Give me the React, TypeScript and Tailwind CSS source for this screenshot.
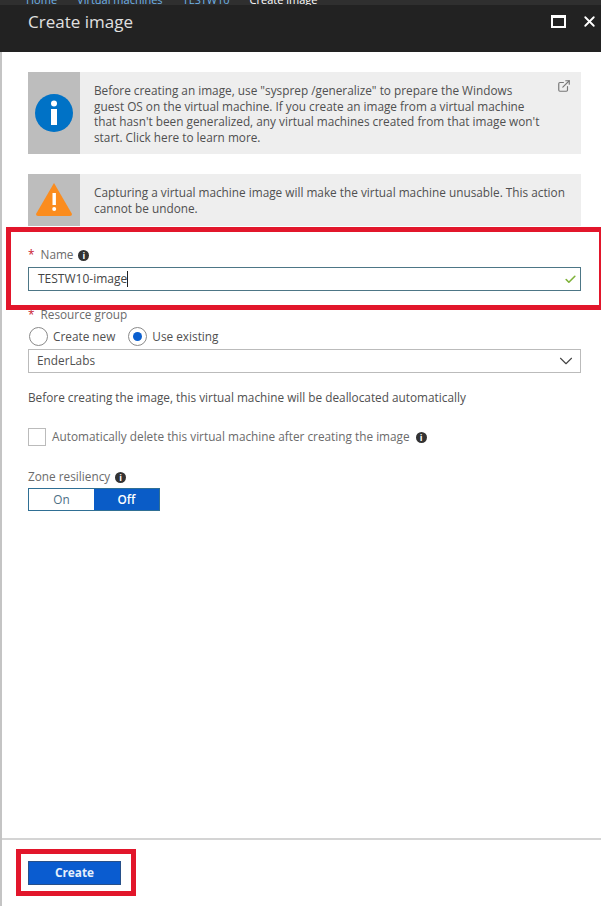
import { ExternalLink, Check, ChevronDown, X } from "lucide-react";

function InfoDot() {
  return (
    <span className="inline-flex h-[11px] w-[11px] items-center justify-center rounded-full bg-[#333] text-[9px] leading-none font-bold text-white">
      i
    </span>
  );
}

function Label({ text, required }: { text: string; required?: boolean }) {
  return (
    <div className="flex h-[16px] items-center text-[11.8px] text-[#6b6b6b]">
      {required && <span className="mr-[6px] text-[#c8202f]">*</span>}
      {text}
    </div>
  );
}

export default function App() {
  return (
    <div className="relative flex h-[906px] w-[601px] flex-col overflow-hidden bg-white font-['Open_Sans',sans-serif] text-[#505050]">
      <div className="flex h-[5px] items-end gap-[20px] overflow-hidden bg-[#2f2f2f] pl-[26px] text-[11px] leading-[11px] text-[#6fb3e8]">
        <span>Home</span>
        <span>Virtual machines</span>
        <span>TESTW10</span>
        <span className="text-white">Create image</span>
      </div>

      <header className="flex h-[47px] items-start justify-between bg-[#222222] pl-[28px] pr-[3px] pt-[3px]">
        <h1 className="text-[17px] leading-[28px] text-[#e0e0e0]">Create image</h1>
        <div className="flex items-center gap-[15px] pt-[5px]">
          <span className="h-[13px] w-[15px] border-2 border-t-[3px] border-white" />
          <X className="h-[17px] w-[17px] text-white" strokeWidth={2.6} />
        </div>
      </header>

      <main className="flex flex-1 flex-col border-l-2 border-[#c4c4c4]">
        <div className="flex-1 pl-[26px] pr-[20px] pt-[20px]">
          <section className="relative flex h-[82px] bg-[#eeeeee]">
            <div className="flex w-[52px] shrink-0 items-center justify-center bg-[#bdbdbd]">
              <svg viewBox="0 0 38 38" className="h-[38px] w-[38px]">
                <circle cx="19" cy="19" r="19" fill="#0072c6" />
                <circle cx="19" cy="9.5" r="3" fill="#fff" />
                <rect x="16" y="15" width="6" height="16" fill="#fff" />
              </svg>
            </div>
            <p className="pl-[14px] pt-[11px] text-[11.8px] leading-[15.5px] whitespace-nowrap">
              Before creating an image, use "sysprep /generalize" to prepare the Windows
              <br />
              guest OS on the virtual machine. If you create an image from a virtual machine
              <br />
              that hasn't been generalized, any virtual machines created from that image won't
              <br />
              start. Click here to learn more.
            </p>
            <ExternalLink className="absolute right-[10px] top-[7px] h-[14px] w-[14px] text-[#777]" />
          </section>

          <section className="mt-[20px] flex h-[52px] bg-[#eeeeee]">
            <div className="flex w-[52px] shrink-0 items-start justify-center bg-[#bdbdbd] pt-[8px]">
              <svg viewBox="0 0 38 34" className="h-[34px] w-[38px]">
                <path d="M19 1 L37 32 Q37 34 35 34 L3 34 Q1 34 1 32 Z" fill="#fb8c1e" />
                <rect x="17.5" y="11" width="3.4" height="12" fill="#fff" />
                <circle cx="19.2" cy="27" r="2" fill="#fff" />
              </svg>
            </div>
            <p className="pl-[14px] pt-[11px] text-[11.8px] leading-[15.5px] whitespace-nowrap">
              Capturing a virtual machine image will make the virtual machine unusable. This action
              <br />
              cannot be undone.
            </p>
          </section>

          <div className="mt-[21px] flex items-center gap-[5px]">
            <Label text="Name" required />
            <InfoDot />
          </div>
          <div className="mt-[4px] flex h-[24px] items-center justify-between border border-[#4d7686] pl-[9px] pr-[3px] text-[12px] text-[#444]">
            <span className="border-r border-[#222] leading-[16px]">TESTW10-image</span>
            <Check className="h-[13px] w-[13px] text-[#7fb23a]" strokeWidth={3} />
          </div>

          <div className="mt-[16px]">
            <Label text="Resource group" required />
          </div>
          <div className="mt-[4px] flex h-[19px] items-center text-[11.8px]">
            <span className="ml-[1px] h-[19px] w-[19px] rounded-full border border-[#8a8a8a]" />
            <span className="ml-[5px]">Create new</span>
            <span className="ml-[13px] flex h-[19px] w-[19px] items-center justify-center rounded-full border border-[#8a8a8a]">
              <span className="h-[9px] w-[9px] rounded-full bg-[#0a5fcf]" />
            </span>
            <span className="ml-[5px]">Use existing</span>
          </div>
          <div className="mt-[3px] flex h-[24px] items-center justify-between border border-[#bbbbbb] pl-[8px] pr-[3px] text-[11.8px]">
            EnderLabs
            <ChevronDown className="h-[22px] w-[22px] text-[#444]" strokeWidth={1.2} />
          </div>

          <p className="mt-[15px] text-[11.8px] leading-[18px]">
            Before creating the image, this virtual machine will be deallocated automatically
          </p>

          <div className="mt-[22px] flex items-center gap-[6px] text-[11.8px] text-[#6b6b6b]">
            <span className="h-[18px] w-[18px] border border-[#bbbbbb]" />
            Automatically delete this virtual machine after creating the image
            <InfoDot />
          </div>

          <div className="mt-[23px] flex items-center gap-[5px]">
            <Label text="Zone resiliency" />
            <InfoDot />
          </div>
          <div className="mt-[3px] flex h-[23px] w-[132px] border border-[#2f6f94] text-[11.8px]">
            <span className="flex flex-1 items-center justify-center text-[#4d6f86]">On</span>
            <span className="flex flex-1 items-center justify-center bg-[#0a5cc7] font-semibold text-white">Off</span>
          </div>
        </div>

        <footer className="h-[68px] border-t-2 border-[#d4d4d4] pl-[26px] pt-[21px]">
          <button className="block h-[24px] w-[93px] border border-[#27508a] bg-[#0a5cd0] text-[11.8px] font-bold text-[#e6f0fb]">
            Create
          </button>
        </footer>
      </main>

      <div className="pointer-events-none absolute left-[6px] top-[227px] h-[83px] w-[595px] border-[5px] border-r-2 border-[#e2162b]" />
      <div className="pointer-events-none absolute left-[16px] top-[849px] h-[47px] w-[120px] border-[5px] border-[#e2162b]" />
    </div>
  );
}
